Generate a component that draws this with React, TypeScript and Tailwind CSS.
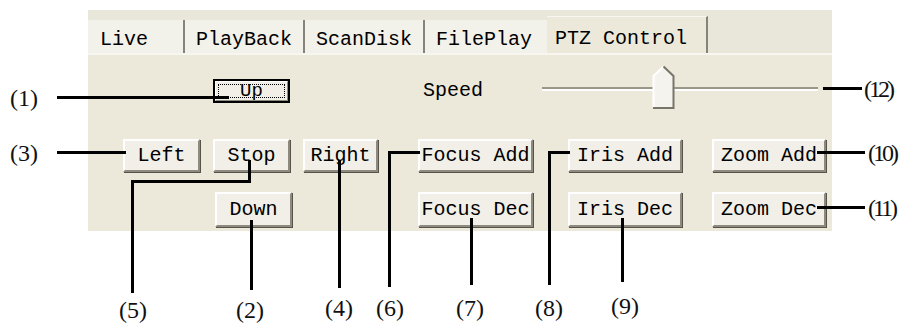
import type { ReactNode } from "react";

const mono = { fontFamily: '"Liberation Mono", "DejaVu Sans Mono", monospace' };
const serif = { fontFamily: '"Liberation Serif", "DejaVu Serif", serif' };

function Btn({
  label,
  className,
  focused,
}: {
  label: string;
  className: string;
  focused?: boolean;
}) {
  if (focused) {
    return (
      <div className={`${className} border-2 border-black bg-[#F1EFE7]`}>
        <div className="h-full w-full border border-t-white border-l-white border-r-[#8E8B7E] border-b-[#8E8B7E] p-[2px]">
          <div className="flex h-full w-full items-center justify-center border border-dotted border-black text-[19px] leading-none text-black">
            {label}
          </div>
        </div>
      </div>
    );
  }
  return (
    <div
      className={`${className} flex items-center justify-center border-2 border-t-white border-l-white border-r-[#8E8B7E] border-b-[#8E8B7E] bg-[#F1EFE7] text-[20px] leading-none text-black shadow-[1px_1px_0_#55534a]`}
    >
      {label}
    </div>
  );
}

function Tab({
  children,
  className,
}: {
  children: ReactNode;
  className: string;
}) {
  return (
    <div className={`${className} flex items-center pt-[7px] text-[20px] leading-none text-black`}>
      {children}
    </div>
  );
}

function Line({ className }: { className: string }) {
  return <div className={`absolute bg-black ${className}`} />;
}

function Label({ text, className }: { text: string; className: string }) {
  return (
    <div
      className={`absolute text-[24px] leading-none text-[#111] ${className}`}
      style={serif}
    >
      {text}
    </div>
  );
}

export default function App() {
  return (
    <div className="relative h-[324px] w-[904px] overflow-hidden bg-white">
      {/* Dialog panel */}
      <div
        className="ml-[88px] mt-[10px] flex h-[221px] w-[744px] flex-col bg-[#ECE9DA]"
        style={mono}
      >
        {/* Tab strip */}
        <div className="flex h-[45px] items-end border-b-2 border-[#F7F6F0] bg-[#E9E7DA]">
          <Tab className="h-[33px] w-[97px] border-r-2 border-[#85837A] bg-[#F2F1EA] pl-[12px]">
            Live
          </Tab>
          <Tab className="h-[33px] w-[120px] border-r-2 border-[#85837A] bg-[#F2F1EA] pl-[11px]">
            PlayBack
          </Tab>
          <Tab className="h-[33px] w-[120px] border-r-2 border-[#85837A] bg-[#F2F1EA] pl-[11px]">
            ScanDisk
          </Tab>
          <Tab className="h-[33px] w-[122px] bg-[#F2F1EA] pl-[11px]">FilePlay</Tab>
          <Tab className="h-[37px] w-[161px] border-r-2 border-t border-[#85837A] border-t-[#F7F6F0] bg-[#ECE9DA] pl-[8px]">
            PTZ Control
          </Tab>
        </div>

        {/* Row 1: Up + speed slider */}
        <div className="mt-[10px] flex h-[44px] items-start">
          <Btn label="Up" focused className="ml-[125px] mt-[14px] h-[24px] w-[77px]" />
          <div className="ml-[133px] mt-[14px] h-[24px] text-[20px] leading-[24px] text-black">
            Speed
          </div>
          <div className="relative ml-[59px] h-[44px] w-[276px]">
            <div className="mt-[22px] h-[4px] w-full border-t-2 border-b-2 border-t-[#9A978A] border-b-white" />
            <svg
              className="absolute left-[110px] top-0"
              width="23"
              height="44"
              viewBox="0 0 23 44"
            >
              <polygon points="1,11 11.5,1 22,11 22,43 1,43" fill="#F4F3EE" />
              <polyline points="1.5,42 1.5,11 11.5,1.5" fill="none" stroke="#ffffff" strokeWidth="2" />
              <polyline points="11.5,1.5 21.5,11 21.5,43 1,43" fill="none" stroke="#77756A" strokeWidth="2" />
            </svg>
          </div>
        </div>

        {/* Row 2 */}
        <div className="mt-[30px] flex h-[33px]">
          <Btn label="Left" className="ml-[35px] h-[33px] w-[77px]" />
          <Btn label="Stop" className="ml-[13px] h-[33px] w-[77px]" />
          <Btn label="Right" className="ml-[13px] h-[33px] w-[75px]" />
          <Btn label="Focus Add" className="ml-[40px] h-[33px] w-[115px]" />
          <Btn label="Iris Add" className="ml-[35px] h-[33px] w-[114px]" />
          <Btn label="Zoom Add" className="ml-[30px] h-[33px] w-[114px]" />
        </div>

        {/* Row 3 */}
        <div className="mt-[20px] flex h-[35px]">
          <Btn label="Down" className="ml-[127px] h-[35px] w-[77px]" />
          <Btn label="Focus Dec" className="ml-[126px] h-[35px] w-[115px]" />
          <Btn label="Iris Dec" className="ml-[35px] h-[35px] w-[114px]" />
          <Btn label="Zoom Dec" className="ml-[30px] h-[35px] w-[114px]" />
        </div>
      </div>

      {/* Callout lines */}
      <Line className="left-[57px] top-[96px] h-[3px] w-[172px]" />
      <Line className="left-[57px] top-[151px] h-[3px] w-[69px]" />
      <Line className="left-[248px] top-[160px] h-[23px] w-[3px]" />
      <Line className="left-[131px] top-[180px] h-[3px] w-[120px]" />
      <Line className="left-[131px] top-[180px] h-[113px] w-[3px]" />
      <Line className="left-[250px] top-[220px] h-[70px] w-[3px]" />
      <Line className="left-[338px] top-[160px] h-[128px] w-[3px]" />
      <Line className="left-[388px] top-[151px] h-[3px] w-[32px]" />
      <Line className="left-[388px] top-[151px] h-[136px] w-[3px]" />
      <Line className="left-[470px] top-[218px] h-[67px] w-[3px]" />
      <Line className="left-[548px] top-[151px] h-[3px] w-[22px]" />
      <Line className="left-[548px] top-[151px] h-[134px] w-[3px]" />
      <Line className="left-[621px] top-[218px] h-[64px] w-[3px]" />
      <Line className="left-[817px] top-[151px] h-[3px] w-[48px]" />
      <Line className="left-[817px] top-[206px] h-[3px] w-[48px]" />
      <Line className="left-[823px] top-[87px] h-[3px] w-[39px]" />

      {/* Callout labels */}
      <Label text="(1)" className="left-[10px] top-[86px]" />
      <Label text="(3)" className="left-[10px] top-[141px]" />
      <Label text="(12)" className="left-[864px] top-[77px] tracking-[-3px]" />
      <Label text="(10)" className="left-[868px] top-[141px] tracking-[-3px]" />
      <Label text="(11)" className="left-[868px] top-[196px] tracking-[-3px]" />
      <Label text="(5)" className="left-[119px] top-[298px]" />
      <Label text="(2)" className="left-[236px] top-[298px]" />
      <Label text="(4)" className="left-[325px] top-[296px]" />
      <Label text="(6)" className="left-[376px] top-[296px]" />
      <Label text="(7)" className="left-[456px] top-[296px]" />
      <Label text="(8)" className="left-[535px] top-[296px]" />
      <Label text="(9)" className="left-[611px] top-[294px]" />
    </div>
  );
}
